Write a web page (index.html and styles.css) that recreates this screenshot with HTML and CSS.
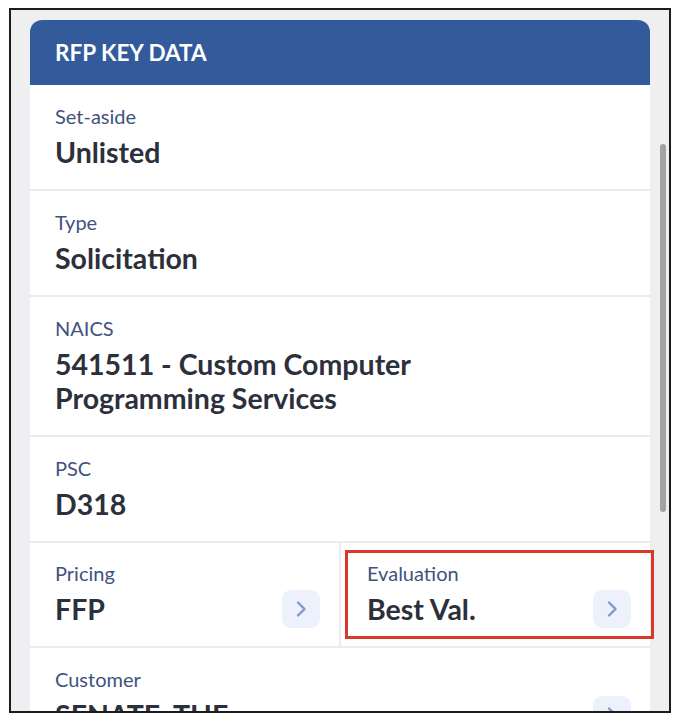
FILE: index.html
```html
<!DOCTYPE html>
<html>
<head>
<meta charset="utf-8">
<link rel="stylesheet" href="styles.css">
</head>
<body>
<div class="frame">
  <div class="card">
    <div class="card-header">RFP KEY DATA</div>
    <div class="rows">
      <div class="cell">
        <div class="label">Set-aside</div>
        <div class="value-line"><div class="value">Unlisted</div></div>
      </div>
      <div class="cell">
        <div class="label">Type</div>
        <div class="value-line"><div class="value">Solicitation</div></div>
      </div>
      <div class="cell">
        <div class="label">NAICS</div>
        <div class="value-line"><div class="value">541511 - Custom Computer<br>Programming Services</div></div>
      </div>
      <div class="cell">
        <div class="label">PSC</div>
        <div class="value-line"><div class="value">D318</div></div>
      </div>
      <div class="pair">
        <div class="cell">
          <div class="label">Pricing</div>
          <div class="value-line">
            <div class="value">FFP</div>
            <button class="chev" aria-label="Open pricing"><svg width="14" height="18" viewBox="0 0 14 18"><path d="M4 2.5l6.5 6.5-6.5 6.5" fill="none" stroke="#8197cd" stroke-width="2.4" stroke-linecap="round" stroke-linejoin="round"/></svg></button>
          </div>
        </div>
        <div class="cell eval">
          <div class="label">Evaluation</div>
          <div class="value-line">
            <div class="value">Best Val.</div>
            <button class="chev" aria-label="Open evaluation"><svg width="14" height="18" viewBox="0 0 14 18"><path d="M4 2.5l6.5 6.5-6.5 6.5" fill="none" stroke="#8197cd" stroke-width="2.4" stroke-linecap="round" stroke-linejoin="round"/></svg></button>
          </div>
          <div class="highlight"></div>
        </div>
      </div>
      <div class="cell">
        <div class="label">Customer</div>
        <div class="value-line">
          <div class="value">SENATE, THE</div>
          <button class="chev" aria-label="Open customer"><svg width="14" height="18" viewBox="0 0 14 18"><path d="M4 2.5l6.5 6.5-6.5 6.5" fill="none" stroke="#8197cd" stroke-width="2.4" stroke-linecap="round" stroke-linejoin="round"/></svg></button>
        </div>
      </div>
    </div>
  </div>
  <div class="scrollbar"></div>
</div>
</body>
</html>
```

FILE: styles.css
```css
* { box-sizing: border-box; }
html, body { margin: 0; padding: 0; background: #ffffff; }
body { font-family: Lato, "Open Sans", sans-serif; }

.frame {
  position: relative;
  margin: 8px 0 0 9px;
  width: 662px;
  height: 705px;
  border: 2px solid #1c1c1c;
  background: #efeff1;
  overflow: hidden;
  padding: 10px 19px 0 19px;
}

.card {
  background: #ffffff;
  border-radius: 12px 12px 0 0;
}

.card-header {
  height: 65px;
  background: #335b9c;
  border-radius: 12px 12px 0 0;
  color: #ffffff;
  font-weight: 700;
  font-size: 22.5px;
  display: flex;
  align-items: center;
  padding-left: 25px;
}

.rows {
  display: flex;
  flex-direction: column;
  gap: 2px;
  background: #ececf0;
}

.cell {
  position: relative;
  background: #ffffff;
  padding: 20px 19px 20px 25px;
}

.label {
  font-size: 20px;
  line-height: 22px;
  color: #41527d;
}

.value-line {
  display: flex;
  align-items: flex-start;
  justify-content: space-between;
  margin-top: 8px;
}

.value {
  font-size: 28.5px;
  line-height: 34px;
  font-weight: 700;
  color: #2b303b;
}

.pair {
  display: grid;
  grid-template-columns: 1fr 1fr;
  gap: 2px;
}

.pair .cell { padding-top: 19px; }

.eval { padding-left: 26px; }

.chev {
  flex: none;
  width: 38px;
  height: 38px;
  margin: -2px 0 -2px 12px;
  border: none;
  border-radius: 9px;
  background: #edf1fb;
  display: flex;
  align-items: center;
  justify-content: center;
  padding: 0;
}

.highlight {
  position: absolute;
  left: 4px;
  right: -4px;
  top: 7px;
  bottom: 7px;
  border: 3px solid #d9392b;
  pointer-events: none;
}

.scrollbar {
  position: absolute;
  left: 649px;
  top: 134px;
  width: 6px;
  height: 368px;
  border-radius: 3px;
  background: #a2a2a2;
}
```
